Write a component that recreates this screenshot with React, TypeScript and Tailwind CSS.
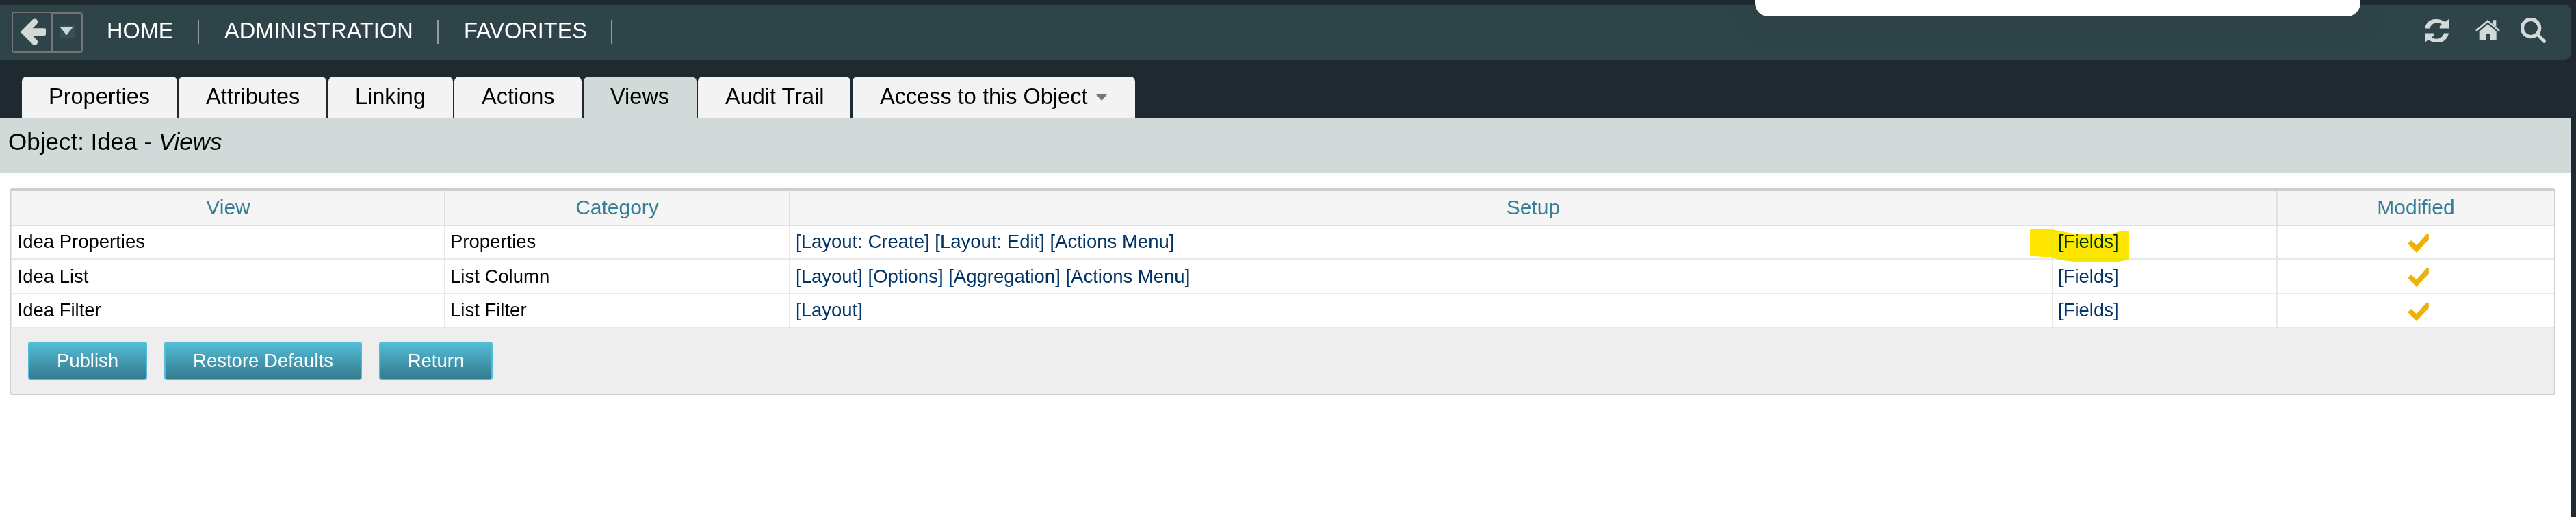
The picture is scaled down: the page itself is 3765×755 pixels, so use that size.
import type { ReactNode } from 'react';

function Separator() {
  return <span className="mt-[22px] h-[35px] w-[2px] shrink-0 bg-[#999997]" />;
}

function NavLink({ className, children }: { className: string; children: ReactNode }) {
  return (
    <a className={`mt-[18px] shrink-0 whitespace-nowrap text-[32.5px] leading-[40px] text-white ${className}`}>
      {children}
    </a>
  );
}

function BackArrow() {
  return (
    <svg className="ml-[11px] mt-[8px]" width="37" height="39" viewBox="90 81 111 117" fill="none">
      <path d="M152 96L108 140L152 184" stroke="#d1dad9" strokeWidth="27" strokeLinecap="round" strokeLinejoin="miter" />
      <path d="M108 124H195Q201 124 201 130V150Q201 156 195 156H108Z" fill="#d1dad9" />
    </svg>
  );
}

function RefreshIcon() {
  const arrow =
    'M41 80C47 50 70 39 93 40C108 40 122 45 131 52L147 40V80H107V70L116 62C100 50 72 53 62 80Z';
  return (
    <svg className="mt-[21px]" width="35" height="34" viewBox="41 40 106 100" preserveAspectRatio="none" fill="#d1dad9">
      <path d={arrow} />
      <path d={arrow} transform="rotate(180 94 90)" />
    </svg>
  );
}

function HomeIcon() {
  return (
    <svg className="ml-[39px] mt-[22px]" width="36" height="30" viewBox="264 43 108 90" fill="#d1dad9">
      <path d="M281 94L318 62L356 94V132H328V104H309V132H281Z" />
      <path d="M341 44H355V78L341 66Z" />
      <path d="M268 92L318 49L368 92" fill="none" stroke="#2e4449" strokeWidth="12" />
      <path d="M267 91L318 48L369 91" fill="none" stroke="#d1dad9" strokeWidth="8" />
    </svg>
  );
}

function SearchIcon() {
  return (
    <svg className="ml-[30px] mt-[19px]" width="37" height="37" viewBox="462 33 111 111" fill="none" stroke="#d1dad9">
      <circle cx="507" cy="78" r="38" strokeWidth="16" />
      <path d="M536 106L565 136" strokeWidth="15" strokeLinecap="round" />
    </svg>
  );
}

function Check() {
  return (
    <svg className="ml-[190px] mt-[12px]" width="31" height="27" viewBox="418 247 92 81" fill="#ebb20a">
      <path d="M418 288L433 274L456 296L500 247H510V270L456 328Z" />
    </svg>
  );
}

function Highlight() {
  return (
    <svg
      className="absolute -left-[34px] top-[4px] mix-blend-darken"
      width="144"
      height="49"
      viewBox="201 222 432 147"
      fill="#ffe600"
    >
      <path d="M201 222C260 221 300 225 335 232C380 242 400 247 450 247C520 247 560 245 580 238Q590 234 600 234H633V354Q615 363 590 366Q560 367 500 367C420 368 370 367 340 358C300 350 260 342 201 342Z" />
    </svg>
  );
}

const tabs = [
  { label: 'Properties', box: 'ml-[32px] w-[227px] pl-[39px]' },
  { label: 'Attributes', box: 'ml-[2px] w-[216px] pl-[40px]' },
  { label: 'Linking', box: 'ml-[3px] w-[182px] pl-[39px]' },
  { label: 'Actions', box: 'ml-[2px] w-[186px] pl-[40px]' },
  { label: 'Views', box: 'ml-[3px] w-[165px] pl-[39px]', active: true },
  { label: 'Audit Trail', box: 'ml-[2px] w-[223px] pl-[40px]' },
  { label: 'Access to this Object', box: 'ml-[3px] w-[413px] pl-[40px]', menu: true },
];

const rows = [
  {
    view: 'Idea Properties',
    category: 'Properties',
    links: '[Layout: Create] [Layout: Edit] [Actions Menu]',
    box: 'h-[50px] border-b-[3px]',
    pad: 'pt-[7px]',
    marked: true,
  },
  {
    view: 'Idea List',
    category: 'List Column',
    links: '[Layout] [Options] [Aggregation] [Actions Menu]',
    box: 'h-[50px] border-b-2',
    pad: 'pt-[8px]',
  },
  {
    view: 'Idea Filter',
    category: 'List Filter',
    links: '[Layout]',
    box: 'h-[49px] border-b-2',
    pad: 'pt-[7px]',
  },
];

function Button({ className, children }: { className: string; children: ReactNode }) {
  return (
    <button
      className={`h-[56px] rounded-[4px] border-2 border-[#52bcd6] bg-linear-to-b from-[#52bdd6] to-[#357b90] pb-[10px] pt-[10px] text-center text-[27.5px] leading-[32px] text-white ${className}`}
    >
      {children}
    </button>
  );
}

export default function App() {
  return (
    <div className="relative h-[755px] w-[3765px] overflow-hidden bg-[#1e2a2f] pr-[7px] font-['Liberation_Sans',Arial,sans-serif] text-black">
      <header className="h-[172px] pt-[7px]">
        <div className="flex h-[80px] items-start rounded-r-[10px] bg-[#2e4449]">
          <div className="ml-[17px] mt-[10px] h-[60px] w-[60px] shrink-0 rounded-l-[4px] border-2 border-[#757472]">
            <BackArrow />
          </div>
          <div className="mt-[11px] h-[59px] w-[44px] shrink-0 rounded-r-[4px] border-2 border-l-0 border-[#757472]">
            <svg className="ml-[10px] mt-[17px]" width="22" height="18" viewBox="261 111 66 54">
              <path d="M261 111H327V165H261Z" fill="#394f55" />
              <path d="M264 120H319L292 154Z" fill="#cad7e6" />
            </svg>
          </div>
          <NavLink className="ml-[35px] w-[98px]">HOME</NavLink>
          <span className="w-[35px] shrink-0" />
          <Separator />
          <NavLink className="ml-[37px] w-[276px]">ADMINISTRATION</NavLink>
          <span className="w-[35px] shrink-0" />
          <Separator />
          <NavLink className="ml-[37px] w-[180px]">FAVORITES</NavLink>
          <span className="w-[35px] shrink-0" />
          <Separator />
          <div className="ml-auto mr-[37px] flex items-start">
            <RefreshIcon />
            <HomeIcon />
            <SearchIcon />
          </div>
        </div>
        <nav className="mt-[25px] flex h-[60px]">
          {tabs.map((tab) => (
            <div
              key={tab.label}
              className={`flex shrink-0 items-start whitespace-nowrap rounded-t-[7px] pt-[9px] text-[32.5px] leading-[40px] ${tab.box} ${tab.active ? 'bg-[#d1dad9]' : 'bg-[#f3f3f3]'}`}
            >
              {tab.label}
              {tab.menu && (
                <svg className="ml-[12px] mt-[16px]" width="18" height="10" viewBox="0 0 18 10">
                  <path d="M0 0H18L9 10Z" fill="#777777" />
                </svg>
              )}
            </div>
          ))}
        </nav>
      </header>

      <div className="h-[80px] bg-[#d1dad9] pl-[12px] pt-[15px] text-[35px] leading-[40px]">
        Object: Idea - <i>Views</i>
      </div>

      <main className="h-[503px] bg-white pl-[14px] pt-[23px]">
        <div className="w-[3721px] rounded-[4px] border-2 border-t-4 border-[#cecfcf] bg-[#eeeeee]">
          <div className="flex h-[51px] border-b-2 border-[#dfdfdf] bg-[#f5f5f5] text-center text-[30px] leading-[36px] text-[#357f97]">
            <div className="w-[635px] border-x-2 border-[#e0e0e0] pt-[6px]">View</div>
            <div className="w-[504px] border-r-2 border-[#e0e0e0] pt-[6px]">Category</div>
            <div className="w-[2174px] border-r-2 border-[#e0e0e0] pt-[6px]">Setup</div>
            <div className="w-[404px] pt-[6px]">Modified</div>
          </div>
          {rows.map((row) => (
            <div
              key={row.view}
              className={`flex border-[#e8e8e8] bg-white text-[27.5px] leading-[32px] ${row.box}`}
            >
              <div className={`w-[635px] border-x-2 border-[#e8e8e8] pl-[7.5px] ${row.pad}`}>{row.view}</div>
              <div className={`w-[504px] border-r-2 border-[#e8e8e8] pl-[7px] ${row.pad}`}>{row.category}</div>
              <div className={`w-[1846px] border-r-2 border-[#e8e8e8] pl-[8px] text-[#003366] ${row.pad}`}>
                {row.links}
              </div>
              <div className={`w-[328px] border-r-2 border-[#e8e8e8] pl-[7px] text-[#003366] ${row.pad}`}>
                [Fields]
              </div>
              <div className="w-[404px]">
                <Check />
              </div>
              {row.marked && (
                <div className="relative -ml-[732px] w-0">
                  <Highlight />
                </div>
              )}
            </div>
          ))}
          <div className="flex h-[96px] items-start gap-[25px] pl-[25px] pt-[20px]">
            <Button className="w-[174px]">Publish</Button>
            <Button className="w-[289px]">Restore Defaults</Button>
            <Button className="w-[166px]">Return</Button>
          </div>
        </div>
      </main>

      <div className="absolute left-[2565px] top-0 h-[24px] w-[885px] rounded-b-[20px] bg-white shadow-[0_6px_40px_rgba(60,60,60,0.25)]" />
    </div>
  );
}
